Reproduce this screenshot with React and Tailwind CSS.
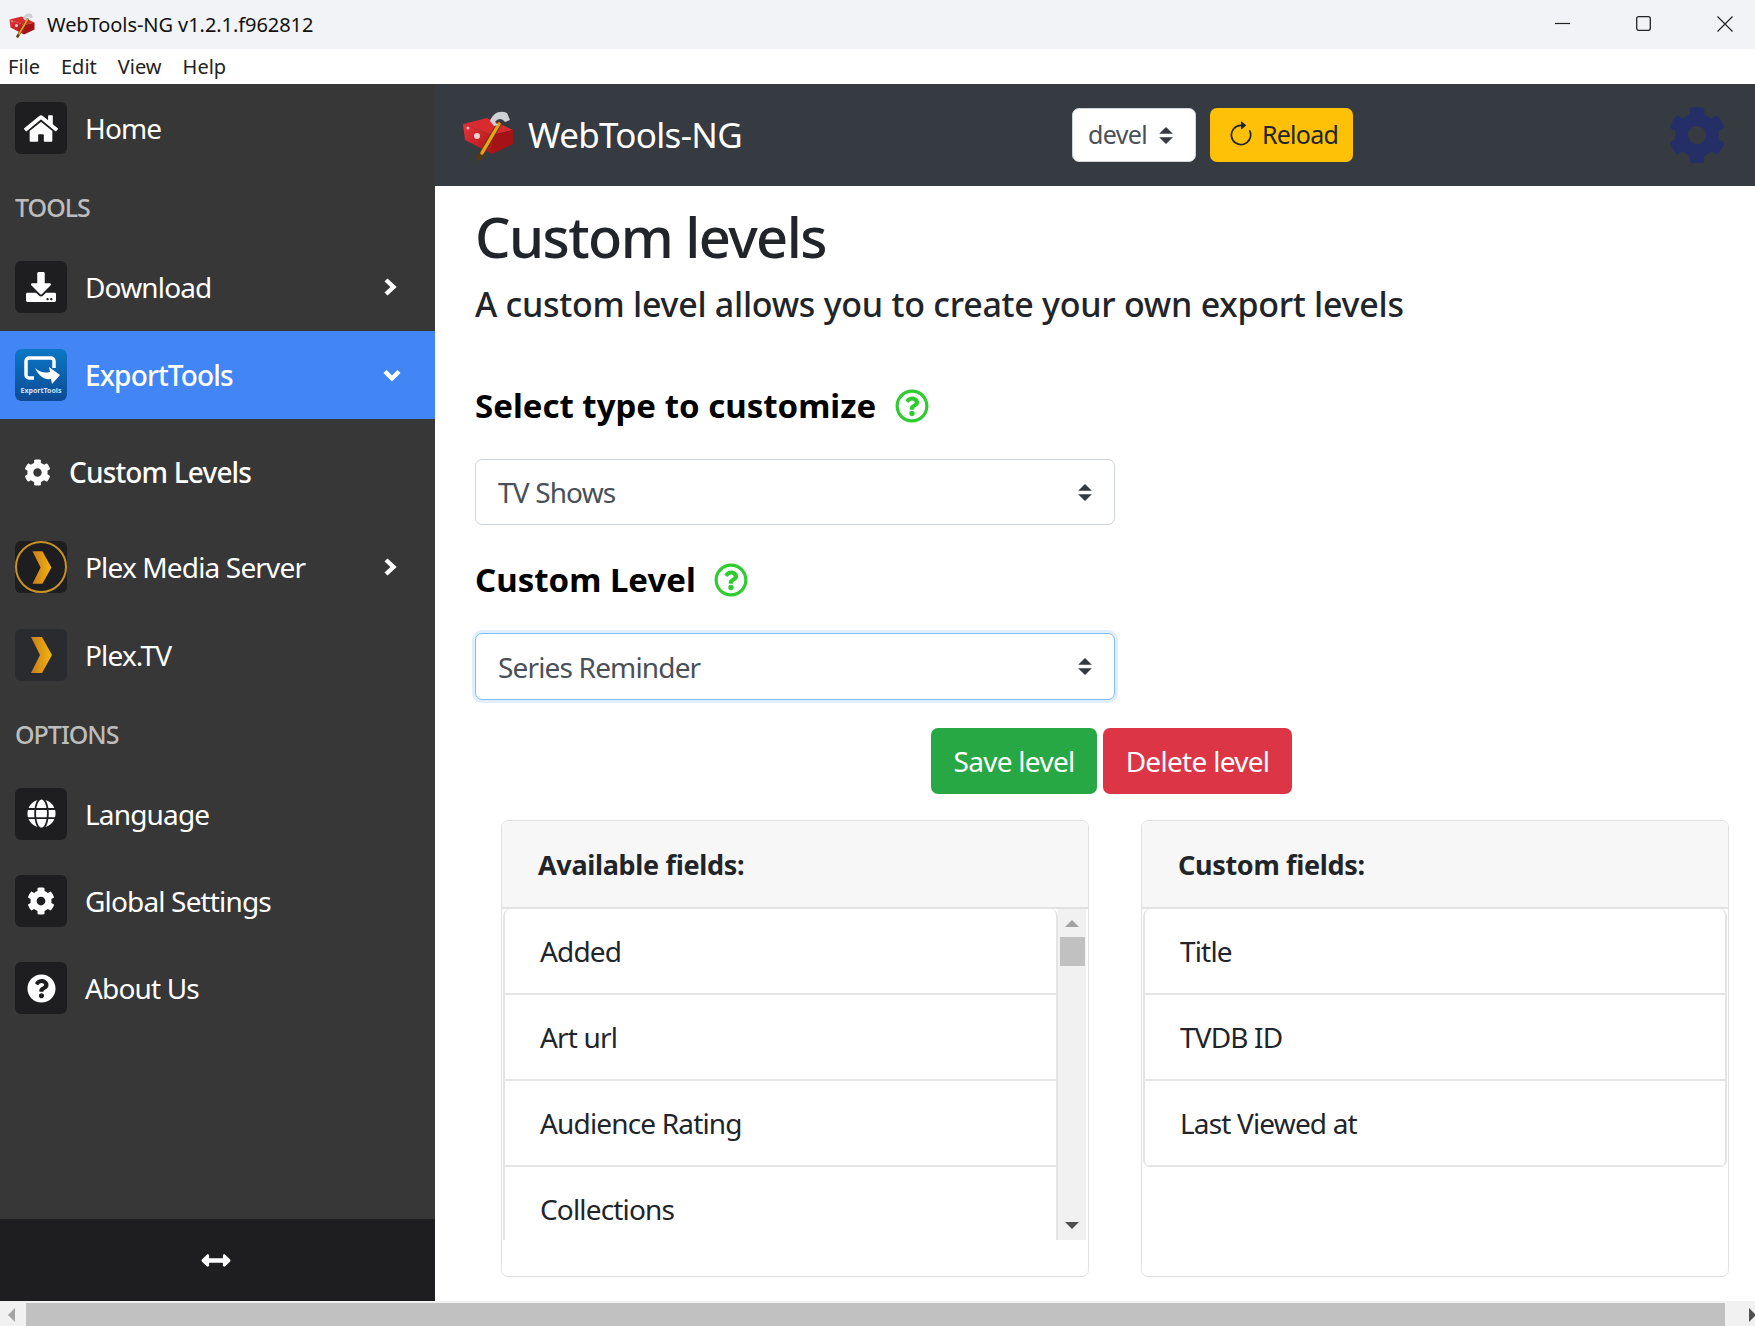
import React from 'react';
import { FaHome, FaDownload, FaCog, FaGlobe, FaQuestionCircle, FaArrowsAltH, FaRegQuestionCircle } from 'react-icons/fa';
import { BsArrowClockwise } from 'react-icons/bs';

const Toolbox = ({ className }) => (
    <svg viewBox="0 0 56 52" className={className}>
        <defs>
            <linearGradient id="boxFront" x1="0" y1="0" x2="1" y2="1">
                <stop offset="0" stopColor="#e8353a" />
                <stop offset="1" stopColor="#a81418" />
            </linearGradient>
        </defs>
        <polygon points="3,15 27,9 53,21 32,26" fill="#d92b2f" />
        <polygon points="3,15 32,26 32,45 5,31" fill="url(#boxFront)" />
        <polygon points="32,26 53,21 53,35 32,45" fill="#a51317" />
        <circle cx="17" cy="27" r="3" fill="#f0d0d0" />
        <circle cx="8" cy="19" r="1.5" fill="#f0b0b0" />
        <line x1="19" y1="49" x2="39" y2="15" stroke="#5a3a08" strokeWidth="5" strokeLinecap="round" />
        <line x1="22" y1="44" x2="39" y2="15" stroke="#eba21e" strokeWidth="3.4" strokeLinecap="round" />
        <path d="M30 12 C33 4 40 1 47 4 L50 11 L45 13 C42 9 38 9 35 13 L38 16 L34 17 Z" fill="#cdd0d4" />
    </svg>
);

const PlexChevron = ({ id, className }) => (
    <svg viewBox="0 0 52 52" className={className}>
        <defs>
            <linearGradient id={id} x1="0" y1="0" x2="1" y2="0">
                <stop offset="0" stopColor="#c97c1a" />
                <stop offset="1" stopColor="#f3b610" />
            </linearGradient>
        </defs>
        <polygon points="16,8 27,8 37,26 27,44 16,44 25,26" fill={`url(#${id})`} />
    </svg>
);

const ExportToolsIcon = () => (
    <svg viewBox="0 0 52 52" className="h-full w-full">
        <defs>
            <linearGradient id="exportBg" x1="0" y1="0" x2="0" y2="1">
                <stop offset="0" stopColor="#0a78c6" />
                <stop offset="1" stopColor="#0d4a94" />
            </linearGradient>
        </defs>
        <rect width="52" height="52" rx="6" fill="url(#exportBg)" />
        <path d="M19 29 H14 a3 3 0 0 1 -3 -3 V12 a3 3 0 0 1 3 -3 H36 a3 3 0 0 1 3 3 V19" fill="none" stroke="#fff" strokeWidth="3.5" />
        <path d="M20 19 C26 24 30 24 35 23 L34 18 L45 26 L37 35 L36 30 C29 31 24 27 20 19 Z" fill="#fff" />
        <text x="26" y="44" textAnchor="middle" fontSize="7" fontWeight="700" fill="#cfe3f5" fontFamily="Noto Sans, sans-serif">ExportTools</text>
    </svg>
);

const SelectArrows = ({ className }) => (
    <svg viewBox="0 0 4 5" className={className}>
        <path d="M2 0L0 2h4zm0 5L0 3h4z" fill="#343a40" />
    </svg>
);

const SideItem = ({ icon, label, arrow, tile = 'bg-[#1e1e20]', active, height = 'h-[88px]' }) => (
    <div className={`flex shrink-0 items-center pl-[15px] ${height} ${active ? 'bg-[#4285f4] font-medium' : ''}`}>
        <div className={`flex h-[52px] w-[52px] items-center justify-center overflow-hidden rounded-[6px] ${tile}`}>
            {icon}
        </div>
        <span className="ml-[18px] text-[28px] tracking-[-0.03em] text-white">{label}</span>
        {arrow === 'right' && (
            <svg viewBox="0 0 14 18" className="ml-auto mr-[38px] h-[18px] w-[14px]">
                <path d="M3 2L10.5 9L3 16" fill="none" stroke="#fff" strokeWidth="4.4" />
            </svg>
        )}
        {arrow === 'down' && (
            <svg viewBox="0 0 18 13" className="ml-auto mr-[34px] h-[13px] w-[18px]">
                <path d="M2 2.5L9 9.5L16 2.5" fill="none" stroke="#fff" strokeWidth="4.4" />
            </svg>
        )}
    </div>
);

const SideTitle = ({ children }) => (
    <div className="flex h-[71px] shrink-0 items-center pl-[15px] text-[25px] font-medium tracking-[-0.04em] text-[#bdbdbd]">{children}</div>
);

const FieldSelect = ({ value, focused }) => (
    <div className={`flex w-[640px] items-center justify-between rounded-[7px] border bg-white pl-[22px] pr-[22px] text-[28px] tracking-[-0.03em] text-[#495057] ${focused ? 'h-[67px] border-[#80bdff] shadow-[0_0_0_3px_rgba(0,123,255,0.12)]' : 'h-[66px] border-[#ced4da]'}`}>
        <span>{value}</span>
        <SelectArrows className="h-[17px] w-[14px]" />
    </div>
);

const FieldCard = ({ title, children }) => (
    <div className="h-[457px] overflow-hidden rounded-[7px] border border-[#e0e0e0] bg-white">
        <div className="flex h-[88px] items-center border-b-2 border-[#e2e2e2] bg-[#f7f7f7] pl-[36px] pt-[3px] text-[27px] font-bold tracking-[-0.012em] text-[#212529]">{title}</div>
        {children}
    </div>
);

const FieldRow = ({ label }) => (
    <div className="flex h-[86px] shrink-0 items-center border-b-2 border-[#e4e4e4] pl-[35px] text-[28px] tracking-[-0.03em] text-[#212529]">{label}</div>
);

export default function App() {
    return (
        <div className="flex h-[1326px] w-[1755px] flex-col overflow-hidden bg-white font-['Noto_Sans',sans-serif]">
            {/* Window title */}
            <div className="flex h-[49px] shrink-0 items-center bg-[#f1f3f6]">
                <Toolbox className="ml-[7px] h-[26px] w-[30px]" />
                <span className="ml-[10px] text-[20px] tracking-[-0.003em] text-[#111]">WebTools-NG v1.2.1.f962812</span>
                <div className="ml-auto flex items-center pb-[2px]">
                    <svg viewBox="0 0 15 15" className="mr-[66px] h-[15px] w-[15px]"><line x1="0" y1="7.5" x2="15" y2="7.5" stroke="#222" strokeWidth="1.2" /></svg>
                    <svg viewBox="0 0 15 15" className="mr-[66px] h-[15px] w-[15px]"><rect x="0.7" y="0.7" width="13.6" height="13.6" rx="2" fill="none" stroke="#222" strokeWidth="1.3" /></svg>
                    <svg viewBox="0 0 16 16" className="mr-[22px] h-[16px] w-[16px]"><path d="M0.5 0.5L15.5 15.5M15.5 0.5L0.5 15.5" stroke="#222" strokeWidth="1.2" /></svg>
                </div>
            </div>

            {/* Menu */}
            <div className="flex h-[35px] shrink-0 items-center gap-[21px] pl-[8px] text-[20px] text-[#222]">
                <span>File</span>
                <span>Edit</span>
                <span>View</span>
                <span>Help</span>
            </div>

            <div className="flex min-h-0 flex-1">
                {/* Sidebar */}
                <div className="flex w-[435px] shrink-0 flex-col bg-[#373737]">
                    <SideItem label="Home" icon={<FaHome className="h-[31px] w-[34px] text-white" />} />
                    <SideTitle>TOOLS</SideTitle>
                    <SideItem label="Download" arrow="right" icon={<FaDownload className="h-[30px] w-[30px] text-white" />} />
                    <SideItem label="ExportTools" arrow="down" active tile="" icon={<ExportToolsIcon />} />
                    <div className="flex h-[104px] shrink-0 items-center pl-[24px] pt-[2px] text-[28px] font-medium tracking-[-0.03em] text-white">
                        <FaCog className="h-[27px] w-[27px]" />
                        <span className="ml-[18px]">Custom Levels</span>
                    </div>
                    <SideItem
                        label="Plex Media Server"
                        arrow="right"
                        icon={
                            <div className="flex h-[52px] w-[52px] items-center justify-center rounded-full border-2 border-[#c8921f]">
                                <PlexChevron id="plexA" className="h-[47px] w-[47px]" />
                            </div>
                        }
                    />
                    <SideItem label="Plex.TV" tile="bg-[#292b2f]" icon={<PlexChevron id="plexB" className="h-[52px] w-[52px]" />} />
                    <SideTitle>OPTIONS</SideTitle>
                    <SideItem label="Language" height="h-[87px]" icon={<FaGlobe className="h-[29px] w-[29px] text-white" />} />
                    <SideItem label="Global Settings" height="h-[87px]" icon={<FaCog className="h-[28px] w-[28px] text-white" />} />
                    <SideItem label="About Us" icon={<FaQuestionCircle className="h-[29px] w-[29px] text-white" />} />
                    <div className="mt-auto flex h-[82px] shrink-0 items-center justify-center bg-[#1e1e20] pr-[3px]">
                        <FaArrowsAltH className="h-[29px] w-[30px] text-white" />
                    </div>
                </div>

                <div className="flex min-w-0 flex-1 flex-col">
                    {/* Header */}
                    <div className="flex h-[102px] shrink-0 items-center bg-[#363a41]">
                        <Toolbox className="ml-[25px] h-[52px] w-[56px]" />
                        <span className="ml-[12px] text-[35px] tracking-[-0.02em] text-white">WebTools-NG</span>
                        <div className="ml-[330px] flex h-[54px] w-[124px] items-center rounded-[7px] border border-[#ced4da] bg-white pl-[15px] text-[25px] tracking-[-0.025em] text-[#495057]">
                            devel
                            <SelectArrows className="ml-[12px] h-[17px] w-[14px]" />
                        </div>
                        <div className="ml-[14px] flex h-[54px] w-[143px] items-center rounded-[7px] bg-[#ffc107] pl-[17px] text-[25px] tracking-[-0.03em] text-[#212529]">
                            <BsArrowClockwise className="h-[28px] w-[28px]" />
                            <span className="ml-[7px]">Reload</span>
                        </div>
                        <FaCog className="ml-auto mr-[29px] h-[58px] w-[58px] text-[#232f66]" />
                    </div>

                    {/* Page */}
                    <div className="min-h-0 flex-1 pl-[40px]">
                        <h1 className="text-[56px] font-medium leading-[100px] tracking-[-0.028em] text-[#212529]">Custom levels</h1>
                        <h2 className="mt-[2px] text-[34px] font-medium leading-[32px] tracking-[-0.008em] text-[#212529]">A custom level allows you to create your own export levels</h2>

                        <div className="mt-[66px] flex h-[40px] items-center text-[33px] font-bold text-black">
                            Select type to customize
                            <FaRegQuestionCircle className="ml-[19px] h-[34px] w-[34px] text-[#2ecc2e]" />
                        </div>
                        <div className="mt-[33px]">
                            <FieldSelect value="TV Shows" />
                        </div>

                        <div className="mt-[35px] flex h-[40px] items-center text-[33px] font-bold text-black">
                            Custom Level
                            <FaRegQuestionCircle className="ml-[18px] h-[34px] w-[34px] text-[#2ecc2e]" />
                        </div>
                        <div className="mt-[33px]">
                            <FieldSelect value="Series Reminder" focused />
                        </div>

                        <div className="ml-[456px] mt-[28px] flex h-[66px] gap-[6px] text-[28px] tracking-[-0.025em] text-white">
                            <div className="flex w-[166px] items-center justify-center rounded-[7px] bg-[#28a745]">Save level</div>
                            <div className="flex w-[189px] items-center justify-center rounded-[7px] bg-[#dc3545]">Delete level</div>
                        </div>

                        <div className="ml-[26px] mt-[26px] grid w-[1228px] grid-cols-[588px_588px] gap-[52px]">
                            <FieldCard title="Available fields:">
                                <div className="flex h-[331px] pl-[1px] pr-[1px]">
                                    <div className="flex w-[555px] flex-col overflow-hidden rounded-t-[7px] border-x-2 border-[#e4e4e4]">
                                        <FieldRow label="Added" />
                                        <FieldRow label="Art url" />
                                        <FieldRow label="Audience Rating" />
                                        <FieldRow label="Collections" />
                                    </div>
                                    <div className="flex w-[28px] flex-col items-center bg-[#f1f1f1]">
                                        <div className="flex h-[28px] shrink-0 items-center justify-center">
                                            <div className="h-0 w-0 border-x-[7px] border-b-[7px] border-x-transparent border-b-[#a3a3a3]"></div>
                                        </div>
                                        <div className="h-[29px] w-[25px] shrink-0 bg-[#c1c1c1]"></div>
                                        <div className="flex-1"></div>
                                        <div className="flex h-[30px] shrink-0 items-center justify-center">
                                            <div className="h-0 w-0 border-x-[7px] border-t-[7px] border-x-transparent border-t-[#505050]"></div>
                                        </div>
                                    </div>
                                </div>
                            </FieldCard>
                            <FieldCard title="Custom fields:">
                                <div className="mx-[1px] flex flex-col overflow-hidden rounded-[7px] border-x-2 border-[#e4e4e4]">
                                    <FieldRow label="Title" />
                                    <FieldRow label="TVDB ID" />
                                    <FieldRow label="Last Viewed at" />
                                </div>
                            </FieldCard>
                        </div>
                    </div>
                </div>
            </div>

            {/* Page scrollbar */}
            <div className="flex h-[25px] shrink-0 bg-[#f1f1f1] pt-[2px]">
                <div className="flex w-[26px] items-center pl-[8px]">
                    <div className="h-0 w-0 border-y-[7px] border-r-[7px] border-y-transparent border-r-[#a3a3a3]"></div>
                </div>
                <div className="flex-1 bg-[#c1c1c1]"></div>
                <div className="flex w-[30px] items-center pl-[24px]">
                    <div className="h-0 w-0 border-y-[7px] border-l-[7px] border-y-transparent border-l-[#505050]"></div>
                </div>
            </div>
        </div>
    );
}
